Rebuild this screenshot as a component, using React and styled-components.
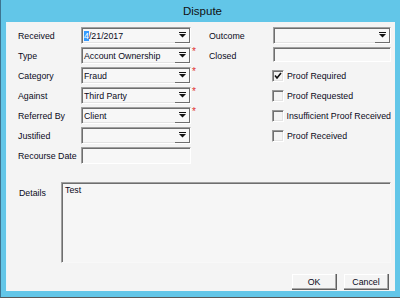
import React from 'react';
import styled, { createGlobalStyle } from 'styled-components';

const Global = createGlobalStyle`
	html, body {
		margin: 0;
		padding: 0;
		background: #62c6e8;
	}
	body {
		font-family: "Liberation Sans", Arial, sans-serif;
	}
`;

const Frame = styled.div`
	box-sizing: border-box;
	width: 400px;
	height: 298px;
	background: #62c6e8;
	border-left: 1px solid #3d7490;
	border-bottom: 1px solid #585858;
	padding: 0 5px 6px 5px;
	display: flex;
	flex-direction: column;
`;

const TitleBar = styled.div`
	height: 22px;
	display: flex;
	align-items: center;
	justify-content: center;
	font-size: 11.5px;
	color: #111;
	padding-left: 4px;
`;

const Client = styled.div`
	flex: 1;
	background: #f4f4f4;
	border-left: 1px solid #e9f6fb;
	display: flex;
	flex-direction: column;
	font-size: 8.8px;
	color: #0a0a1a;
`;

const FormRow = styled.div`
	display: flex;
	padding-top: 5px;
`;

const Column = styled.div`
	display: grid;
	grid-template-columns: ${p => p.$cols};
	grid-auto-rows: 17px;
	row-gap: 3px;
	padding-left: ${p => p.$pad || 0}px;
`;

const Label = styled.div`
	display: flex;
	align-items: center;
	white-space: nowrap;
`;

const Sunken = styled.div`
	box-sizing: border-box;
	height: ${p => p.$h || 17}px;
	background: #f7f7f7;
	border-top: 1px solid #a0a0a0;
	border-left: 1px solid #a0a0a0;
	border-right: 1px solid #ffffff;
	border-bottom: 1px solid #ffffff;
	box-shadow: inset 1px 1px 0 #6e6e6e;
	display: flex;
	align-items: center;
	padding-left: 2px;
	overflow: hidden;
	white-space: nowrap;
`;

const ComboBox = styled(Sunken)`
	padding-right: 0;
	box-shadow: inset 1px 1px 0 #6e6e6e, inset -1px -1px 0 #e3e3e3;
`;

const ComboText = styled.span`
	flex: 1;
`;

const ArrowButton = styled.div`
	box-sizing: border-box;
	width: 15px;
	height: 100%;
	display: flex;
	align-items: center;
	justify-content: center;
	border-right: 1px solid #6e6e6e;
	border-bottom: 1px solid #6e6e6e;
`;

const Selected = styled.span`
	background: #3399ff;
	color: #ffffff;
`;

const Required = styled.div`
	color: #e03030;
	font-size: 10px;
	line-height: 10px;
	padding-left: 1px;
	padding-top: 0;
`;

const CheckRow = styled.label`
	display: flex;
	align-items: center;
	gap: 3px;
	margin-left: -1px;
	white-space: nowrap;
`;

const CheckBox = styled.div`
	box-sizing: border-box;
	width: 12px;
	height: 12px;
	border-top: 1px solid #9a9a9a;
	border-left: 1px solid #9a9a9a;
	border-right: 1px solid #ffffff;
	border-bottom: 1px solid #ffffff;
	box-shadow: inset 1px 1px 0 #707070, inset -1px -1px 0 #e3e3e3;
	display: flex;
	align-items: center;
	justify-content: center;
`;

const DetailsRow = styled.div`
	display: flex;
	margin-top: 18px;
	padding-left: 12px;
`;

const DetailsLabel = styled.div`
	width: 42px;
	padding-top: 6px;
`;

const TextArea = styled.div`
	box-sizing: border-box;
	width: 330px;
	height: 81px;
	background: #f6f6f6;
	border-top: 1px solid #a0a0a0;
	border-left: 1px solid #a0a0a0;
	border-right: 1px solid #f8f8f8;
	border-bottom: 1px solid #f8f8f8;
	box-shadow: inset 1px 1px 0 #6e6e6e;
	padding: 2px 3px;
`;

const Footer = styled.div`
	display: flex;
	justify-content: flex-end;
	gap: 7px;
	margin-top: 11px;
	padding-right: 6px;
`;

const Button = styled.button`
	box-sizing: border-box;
	width: 45px;
	height: 16px;
	padding: 0;
	background: #f4f4f4;
	font-family: inherit;
	font-size: 8.8px;
	color: #0a0a1a;
	border: none;
	border-right: 1px solid #606060;
	border-bottom: 1px solid #606060;
	box-shadow: inset -1px -1px 0 #a8a8a8, inset 1px 1px 0 #ffffff;
`;

const Arrow = () => (
	<svg width="7" height="6" viewBox="0 0 7 6">
		<rect x="0" y="0" width="7" height="1" fill="#111" />
		<polygon points="0,2 7,2 3.5,5.5" fill="#111" />
	</svg>
);

const Check = () => (
	<svg width="8" height="8" viewBox="0 0 8 8">
		<polyline points="1,3.5 3,6 7,1" fill="none" stroke="#111" strokeWidth="1.6" />
	</svg>
);

const Combo = ({ children }) => (
	<ComboBox>
		<ComboText>{children}</ComboText>
		<ArrowButton><Arrow /></ArrowButton>
	</ComboBox>
);

const Option = ({ checked, children }) => (
	<CheckRow>
		<CheckBox>{checked && <Check />}</CheckBox>
		{children}
	</CheckRow>
);

export default function App() {
	return (
		<Frame>
			<Global />
			<TitleBar>Dispute</TitleBar>
			<Client>
				<FormRow>
					<Column $cols="63px 110px 18px" $pad={11}>
						<Label>Received</Label>
						<Combo><Selected>4</Selected>/21/2017</Combo>
						<div />
						<Label>Type</Label>
						<Combo>Account Ownership</Combo>
						<Required>*</Required>
						<Label>Category</Label>
						<Combo>Fraud</Combo>
						<Required>*</Required>
						<Label>Against</Label>
						<Combo>Third Party</Combo>
						<Required>*</Required>
						<Label>Referred By</Label>
						<Combo>Client</Combo>
						<Required>*</Required>
						<Label>Justified</Label>
						<Combo />
						<div />
						<Label>Recourse Date</Label>
						<Sunken />
						<div />
					</Column>
					<Column $cols="64px 118px">
						<Label>Outcome</Label>
						<Combo />
						<Label>Closed</Label>
						<Sunken $h={15} />
						<div />
						<Option checked>Proof Required</Option>
						<div />
						<Option>Proof Requested</Option>
						<div />
						<Option>Insufficient Proof Received</Option>
						<div />
						<Option>Proof Received</Option>
					</Column>
				</FormRow>
				<DetailsRow>
					<DetailsLabel>Details</DetailsLabel>
					<TextArea>Test</TextArea>
				</DetailsRow>
				<Footer>
					<Button>OK</Button>
					<Button>Cancel</Button>
				</Footer>
			</Client>
		</Frame>
	);
}
